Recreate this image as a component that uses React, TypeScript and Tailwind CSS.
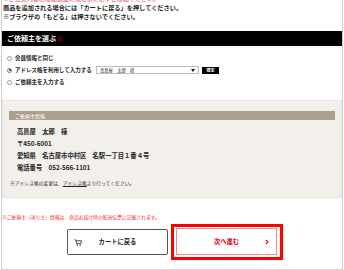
export default function App() {
  return (
    <div className="w-[344px] h-[270px] bg-white overflow-hidden font-['Noto_Sans_CJK_JP','Noto_Sans',sans-serif] text-[#222]">
      <div className="ml-[1px] w-[342px] h-[270px] border-x border-b border-[#cfcfcf] flex flex-col">
        <div className="h-[3px] overflow-hidden pl-[1px]">
          <p className="-mt-[6px] text-[6px] leading-[9px] text-[#e8585f] whitespace-nowrap">
            ※ご注文内容の確認画面に進む前に必ずご確認ください。
          </p>
        </div>
        <div className="pl-[1px] text-[6.2px] leading-[9px] font-bold whitespace-nowrap">
          <p>商品を追加される場合には「カートに戻る」を押してください。</p>
          <p>※ブラウザの「もどる」は押さないでください。</p>
        </div>
        <div className="mt-[10px] h-[15px] bg-black flex items-center pl-[5px] text-[7px] font-bold text-white">
          ご依頼主を選ぶ<span className="text-[#d0021b]">※</span>
        </div>
        <div className="mt-[6px] flex flex-col text-[5.5px] font-bold">
          <div className="h-[12px] flex items-center pl-[5px]">
            <span className="w-[5px] h-[5px] rounded-full border border-[#999] bg-white" />
            <span className="ml-[3px]">会員情報と同じ</span>
          </div>
          <div className="h-[12px] flex items-center pl-[5px]">
            <span className="w-[5px] h-[5px] rounded-full border border-[#777] bg-white flex items-center justify-center">
              <span className="w-[2px] h-[2px] rounded-full bg-[#333]" />
            </span>
            <span className="ml-[3px] w-[81px] whitespace-nowrap">アドレス帳を利用して入力する</span>
            <div className="w-[103px] h-[8px] border border-[#bdbdbd] bg-white flex items-center pl-[3px] pr-[3px] text-[4.3px] font-normal">
              <span className="flex-1 whitespace-nowrap">高島屋　太郎　様</span>
              <svg width="4" height="3" viewBox="0 0 4 3">
                <polygon points="0,0 4,0 2,3" fill="#111" />
              </svg>
            </div>
            <div className="ml-[3px] w-[17px] h-[7px] bg-black text-white text-[4px] flex items-center justify-center">
              確定
            </div>
          </div>
          <div className="h-[12px] flex items-center pl-[5px]">
            <span className="w-[5px] h-[5px] rounded-full border border-[#999] bg-white" />
            <span className="ml-[3px]">ご依頼主を入力する</span>
          </div>
        </div>
        <div className="mt-[12px] bg-[#f3f0eb] border border-[#e8e3dc] px-[6px] pt-[10px] pb-[9px]">
          <div className="h-[9px] bg-[#ad9f8e] text-white text-[5px] flex items-center pl-[6px]">ご依頼主情報</div>
          <div className="mt-[6px] pl-[8px] text-[6.3px] leading-[12px] font-bold whitespace-nowrap">
            <p>高島屋　太郎　様</p>
            <p>〒450-6001</p>
            <p>愛知県　名古屋市中村区　名駅一丁目１番４号</p>
            <p>電話番号　052-566-1101</p>
          </div>
          <p className="mt-[4px] pl-[1px] text-[4.8px] leading-[10px] whitespace-nowrap">
            ※アドレス帳の変更は、<span className="underline">アドレス帳</span>より行ってください。
          </p>
        </div>
        <p className="mt-[14px] text-[4.8px] leading-[10px] text-[#ff1a1a] whitespace-nowrap">
          ※ご依頼主（送り主）情報は、商品お届け時の配送伝票に記載されます。
        </p>
        <div className="mt-[2px] flex items-center pl-[65px]">
          <div className="w-[101px] h-[26px] border border-[#555] rounded-[2px] flex items-center px-[6px] text-[6.3px] font-bold">
            <svg width="8" height="7" viewBox="0 0 8 7">
              <path d="M0.5 0.8 H1.8 L2.6 4.6 H6.8 L7.5 1.8 H2.1" fill="none" stroke="#444" strokeWidth="1" />
              <circle cx="3.2" cy="6" r="0.8" fill="#444" />
              <circle cx="6.2" cy="6" r="0.8" fill="#444" />
            </svg>
            <span className="flex-1 text-center">カートに戻る</span>
            <span className="w-[8px]" />
          </div>
          <div className="ml-[3px] border-[3px] border-[#ff0000] pt-[1px] pb-[2px] pl-[2px] pr-[3px]">
            <div className="w-[101px] h-[27px] border border-[#f08a8a] flex items-center px-[7px] text-[6.3px] font-bold text-[#e60012]">
              <span className="w-[4px]" />
              <span className="flex-1 text-center">次へ進む</span>
              <svg width="4" height="6" viewBox="0 0 4 6">
                <polyline points="0.8,0.8 3,3 0.8,5.2" fill="none" stroke="#e60012" strokeWidth="1.1" />
              </svg>
            </div>
          </div>
        </div>
      </div>
    </div>
  );
}
